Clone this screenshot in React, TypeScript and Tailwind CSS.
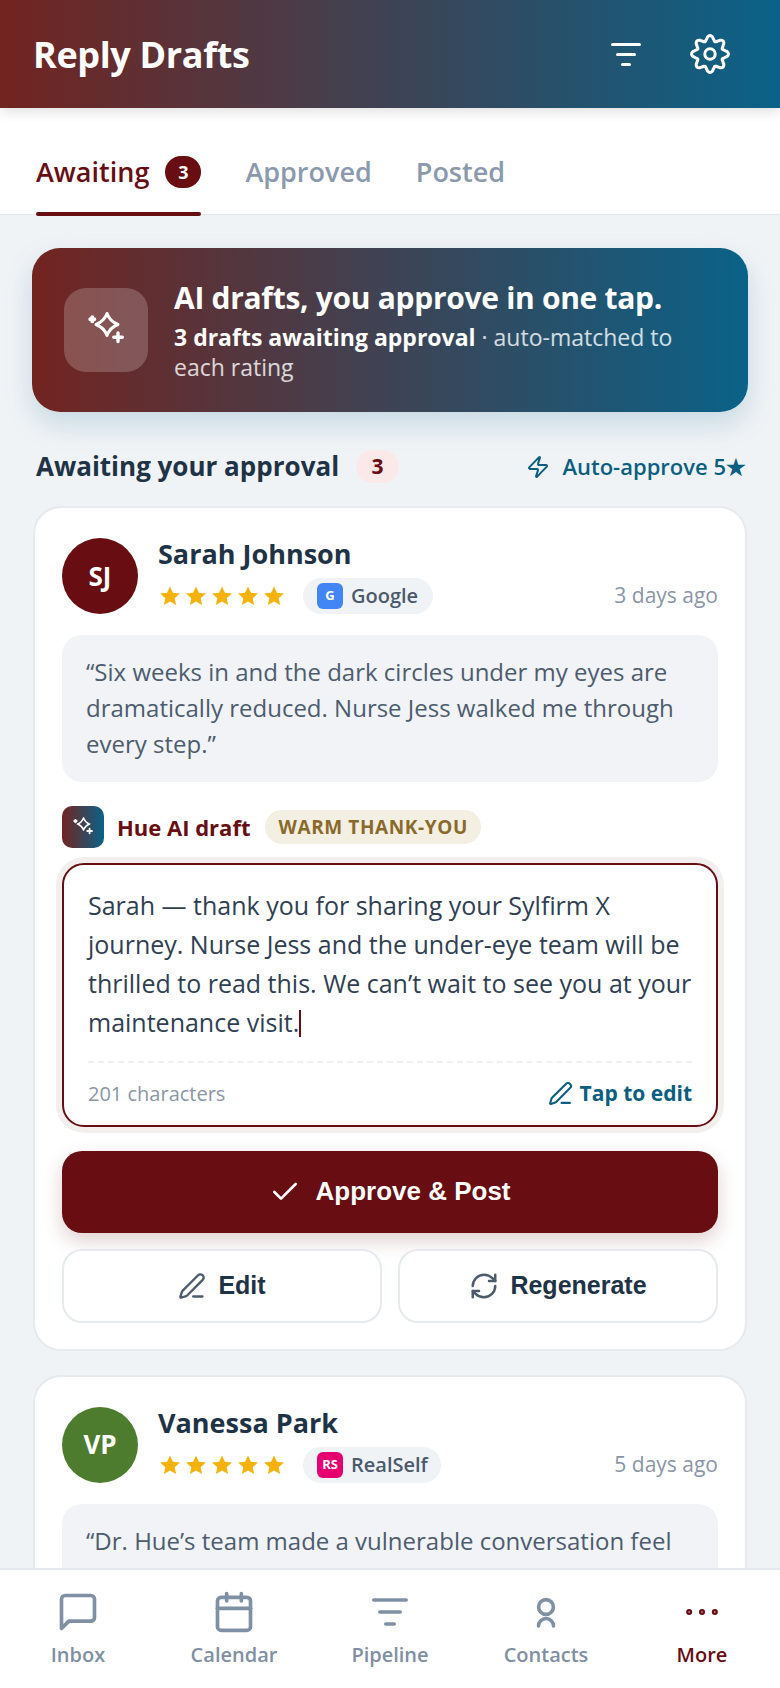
import { Zap, PenLine, Check, RefreshCw, Calendar, Ellipsis } from "lucide-react";

const Sparkle = ({ size }: { size: number }) => (
  <svg width={size} height={size} viewBox="0 0 40 40" fill="none" stroke="currentColor" strokeWidth={3} strokeLinecap="round" strokeLinejoin="round">
    <path d="M21 3.5 Q24 11.5 32 14.5 Q24 17.5 21 25.5 Q18 17.5 10 14.5 Q18 11.5 21 3.5 Z" />
    <path d="M32 23v8.5M27.8 27.3h8.5" strokeWidth={3.4} />
    <path d="M6.3 7.3v4M4.3 9.3h4" strokeWidth={4} />
  </svg>
);

const gearPath = (() => {
  const pts: string[] = [];
  for (let i = 0; i < 192; i++) {
    const t = (i / 192) * Math.PI * 2;
    const c = Math.cos(8 * t);
    const r = 15.8 + 2.6 * (c >= 0 ? Math.pow(c, 0.7) : -Math.pow(-c, 1.3));
    pts.push(`${(20 + r * Math.sin(t)).toFixed(2)} ${(20 - r * Math.cos(t)).toFixed(2)}`);
  }
  return "M" + pts.join("L") + "Z";
})();

const Gear = () => (
  <svg width="40" height="40" viewBox="0 0 40 40" fill="none" stroke="currentColor" strokeWidth="3" strokeLinejoin="round">
    <path d={gearPath} />
    <circle cx="20" cy="20" r="5.2" />
  </svg>
);

const Funnel = ({ w, h }: { w: number; h: number }) => (
  <svg width={w} height={h} viewBox="0 0 30 23" fill="none" stroke="currentColor" strokeWidth="3" strokeLinecap="round">
    <path d="M1.5 1.5h27M6.5 11.5h17M11.5 21.5h7" />
  </svg>
);

const Star = () => (
  <svg width="22" height="22" viewBox="0 0 24 24" fill="#f4b20a">
    <path d="M12 1.5l3.2 7 7.6.8-5.7 5.1 1.6 7.5L12 18.1l-6.7 3.8 1.6-7.5L1.2 9.3l7.6-.8z" />
  </svg>
);

const Stars = () => (
  <div className="flex gap-[4px] ml-[1px]">
    <Star /><Star /><Star /><Star /><Star />
  </div>
);

function ReviewHead({ initials, avatar, name, badge, badgeBg, source, when, badgeW }: { initials: string; avatar: string; name: string; badge: string; badgeBg: string; source: string; when: string; badgeW: string }) {
  return (
    <div className="flex gap-[20px]">
      <div className={`w-[76px] h-[76px] rounded-full flex items-center justify-center text-white font-bold text-[26px] shrink-0 ${avatar}`}>{initials}</div>
      <div className="flex-1 min-w-0">
        <div className="text-[27px] leading-[34px] font-bold text-[#1f3347] mt-[-1px]">{name}</div>
        <div className="flex items-center mt-[7px]">
          <Stars />
          <div className={`ml-[18px] h-[36px] rounded-full bg-[#f0f3f6] flex items-center pl-[14px] ${badgeW}`}>
            <span className={`w-[26px] h-[26px] rounded-[6px] text-white text-[13px] font-bold flex items-center justify-center ${badgeBg}`}>{badge}</span>
            <span className="ml-[8px] text-[20px] font-semibold text-[#4a5a6c]">{source}</span>
          </div>
          <span className="ml-auto text-[21px] text-[#8a96a6]">{when}</span>
        </div>
      </div>
    </div>
  );
}

export default function App() {
  return (
    <div className="w-[780px] h-[1688px] flex flex-col overflow-hidden bg-[#f0f3f6] font-['Open_Sans',sans-serif]">
      <header className="relative z-10 h-[108px] shrink-0 flex items-center pl-[33px] pr-[50px] bg-[linear-gradient(90deg,#722420,#0a6288)] shadow-[0_4px_12px_rgba(0,0,0,0.12)]">
        <h1 className="text-[36px] font-bold text-white tracking-[-0.36px] mt-[2px]">Reply Drafts</h1>
        <span className="ml-auto text-white"><Funnel w={30} h={23} /></span>
        <span className="ml-[49px] text-white"><Gear /></span>
      </header>

      <nav className="h-[107px] shrink-0 bg-white border-b border-[#e4e7eb] flex items-end px-[36px] gap-[44px] text-[27px] font-semibold">
        <div className="relative h-full flex items-center pt-[22px] gap-[16px] text-[#680d11]">
          Awaiting
          <span className="w-[36px] h-[32px] rounded-full bg-[#680d11] text-white text-[18px] font-bold flex items-center justify-center">3</span>
          <span className="absolute left-0 right-0 bottom-[-2px] h-[4px] rounded-[2px] bg-[#680d11]" />
        </div>
        <div className="h-full flex items-center pt-[22px] text-[#8a99ad]">Approved</div>
        <div className="h-full flex items-center pt-[22px] text-[#8a99ad]">Posted</div>
      </nav>

      <main className="flex-1 min-h-0 overflow-hidden px-[32px] pt-[33px]">
        <section className="h-[164px] rounded-[28px] bg-[linear-gradient(90deg,#722420,#0a6288)] shadow-[0_12px_28px_rgba(10,98,136,0.18)] flex items-center pl-[32px] pr-[24px] gap-[26px]">
          <div className="w-[84px] h-[84px] rounded-[22px] bg-white/20 flex items-center justify-center text-white shrink-0">
            <Sparkle size={40} />
          </div>
          <div className="min-w-0 pt-[2px]">
            <div className="text-[30px] leading-[36px] font-bold text-white tracking-[-0.3px]">AI drafts, you approve in one tap.</div>
            <p className="text-[23px] leading-[30px] mt-[6px] text-white/80"><b className="font-bold text-white">3 drafts awaiting approval</b> · auto-matched to each rating</p>
          </div>
        </section>

        <div className="flex items-center mt-[35px] pl-[4px] pr-[2px]">
          <h2 className="text-[26px] font-bold text-[#1f3347]">Awaiting your approval</h2>
          <span className="ml-[17px] w-[43px] h-[33px] rounded-full bg-[#fbe9e9] text-[#680d11] text-[21px] font-bold flex items-center justify-center">3</span>
          <span className="ml-auto flex items-center gap-[12px] text-[22px] font-semibold text-[#0a5f80]"><Zap size={24} strokeWidth={2} />Auto-approve 5★</span>
        </div>

        <article className="mt-[20px] mx-[1px] rounded-[28px] bg-white border-2 border-[#e6e9ed] px-[27px] pt-[30px] pb-[26px]">
          <ReviewHead initials="SJ" avatar="bg-[#680d11]" name="Sarah Johnson" badge="G" badgeBg="bg-[#4285f4]" source="Google" when="3 days ago" badgeW="w-[130px]" />
          <blockquote className="mt-[21px] rounded-[20px] bg-[#f1f3f6] px-[24px] pt-[19px] pb-[20px] text-[24px] leading-[36px] text-[#4c5c6e]">
            “Six weeks in and the dark circles under my eyes are dramatically reduced. Nurse Jess walked me through every step.”
          </blockquote>
          <div className="flex items-center mt-[24px]">
            <span className="w-[42px] h-[42px] rounded-[10px] bg-[linear-gradient(90deg,#722420,#0a6288)] text-white flex items-center justify-center"><Sparkle size={22} /></span>
            <span className="ml-[13px] text-[22px] font-bold text-[#680d11]">Hue AI draft</span>
            <span className="ml-[15px] h-[34px] px-[13px] rounded-full bg-[#f3efe3] text-[#8a6a2a] text-[19px] font-bold flex items-center tracking-[0.6px]">WARM THANK-YOU</span>
          </div>
          <div className="mt-[15px] rounded-[22px] bg-white border-2 border-[#680d11] shadow-[0_0_0_6px_#f3efee] px-[24px] pt-[21px] pb-[15px]">
            <p className="text-[25px] leading-[39px] text-[#2f4052]">
              Sarah — thank you for sharing your Sylfirm X journey. Nurse Jess and the under-eye team will be thrilled to read this. We can’t wait to see you at your maintenance visit.<span className="inline-block w-[2px] h-[27px] bg-[#680d11] align-[-5px]" />
            </p>
            <div className="mt-[19px] border-t-2 border-dashed border-[#eef0f3] pt-[15px] flex items-center">
              <span className="text-[20px] text-[#8a96a6]">201 characters</span>
              <span className="ml-auto flex items-center gap-[7px] text-[21px] font-bold text-[#0a5f80]"><PenLine size={25} strokeWidth={2} />Tap to edit</span>
            </div>
          </div>
          <button className="mt-[24px] w-full h-[82px] rounded-[20px] bg-[#680d11] text-white font-['Liberation_Sans',sans-serif] font-bold text-[26px] flex items-center justify-center gap-[14px] shadow-[0_8px_20px_rgba(107,15,18,0.2)]">
            <Check size={32} strokeWidth={2} />Approve &amp; Post
          </button>
          <div className="grid grid-cols-2 gap-[16px] mt-[16px]">
            <button className="h-[74px] rounded-[20px] bg-white border-2 border-[#e6e9ed] text-[#1f3347] font-['Liberation_Sans',sans-serif] font-bold text-[25px] flex items-center justify-center gap-[12px]">
              <PenLine size={28} strokeWidth={2} className="text-[#4c5c6e]" />Edit
            </button>
            <button className="h-[74px] rounded-[20px] bg-white border-2 border-[#e6e9ed] text-[#1f3347] font-['Liberation_Sans',sans-serif] font-bold text-[25px] flex items-center justify-center gap-[11px]">
              <RefreshCw size={30} strokeWidth={2} className="text-[#4c5c6e]" />Regenerate
            </button>
          </div>
        </article>

        <article className="mt-[24px] mx-[1px] rounded-[28px] bg-white border-2 border-[#e6e9ed] px-[27px] pt-[30px] pb-[26px]">
          <ReviewHead initials="VP" avatar="bg-[#4d7c2f]" name="Vanessa Park" badge="RS" badgeBg="bg-[#e6006f]" source="RealSelf" when="5 days ago" badgeW="w-[138px]" />
          <blockquote className="mt-[21px] min-h-[160px] rounded-[20px] bg-[#f1f3f6] px-[24px] pt-[19px] pb-[20px] text-[24px] leading-[36px] text-[#4c5c6e]">
            “Dr. Hue’s team made a vulnerable conversation feel
          </blockquote>
        </article>
      </main>

      <footer className="relative z-10 h-[120px] shrink-0 bg-white border-t-2 border-[#e6e9ed] grid grid-cols-5 text-[20px] font-semibold text-[#8090a4]">
        <div className="flex flex-col items-center pt-[20px]">
          <svg width="44" height="44" viewBox="0 0 24 24" fill="none" stroke="currentColor" strokeWidth="2" strokeLinejoin="round" strokeLinecap="round"><path d="M21 15a2 2 0 0 1-2 2H7l-4 4V5a2 2 0 0 1 2-2h14a2 2 0 0 1 2 2z" /></svg>
          <span className="mt-[6px]">Inbox</span>
        </div>
        <div className="flex flex-col items-center pt-[20px]"><Calendar size={44} strokeWidth={2} /><span className="mt-[6px]">Calendar</span></div>
        <div className="flex flex-col items-center pt-[20px]">
          <span className="h-[44px] flex items-center"><Funnel w={36} h={28} /></span>
          <span className="mt-[6px]">Pipeline</span>
        </div>
        <div className="flex flex-col items-center pt-[20px]">
          <svg width="44" height="44" viewBox="0 0 44 44" fill="none" stroke="currentColor" strokeWidth="3.6" strokeLinecap="round"><circle cx="22" cy="17" r="7.4" /><path d="M14.5 36a7.5 7.5 0 0 1 15 0" /></svg>
          <span className="mt-[6px]">Contacts</span>
        </div>
        <div className="flex flex-col items-center pt-[20px] text-[#680d11]"><Ellipsis size={44} strokeWidth={1.3} /><span className="mt-[6px]">More</span></div>
      </footer>
    </div>
  );
}
